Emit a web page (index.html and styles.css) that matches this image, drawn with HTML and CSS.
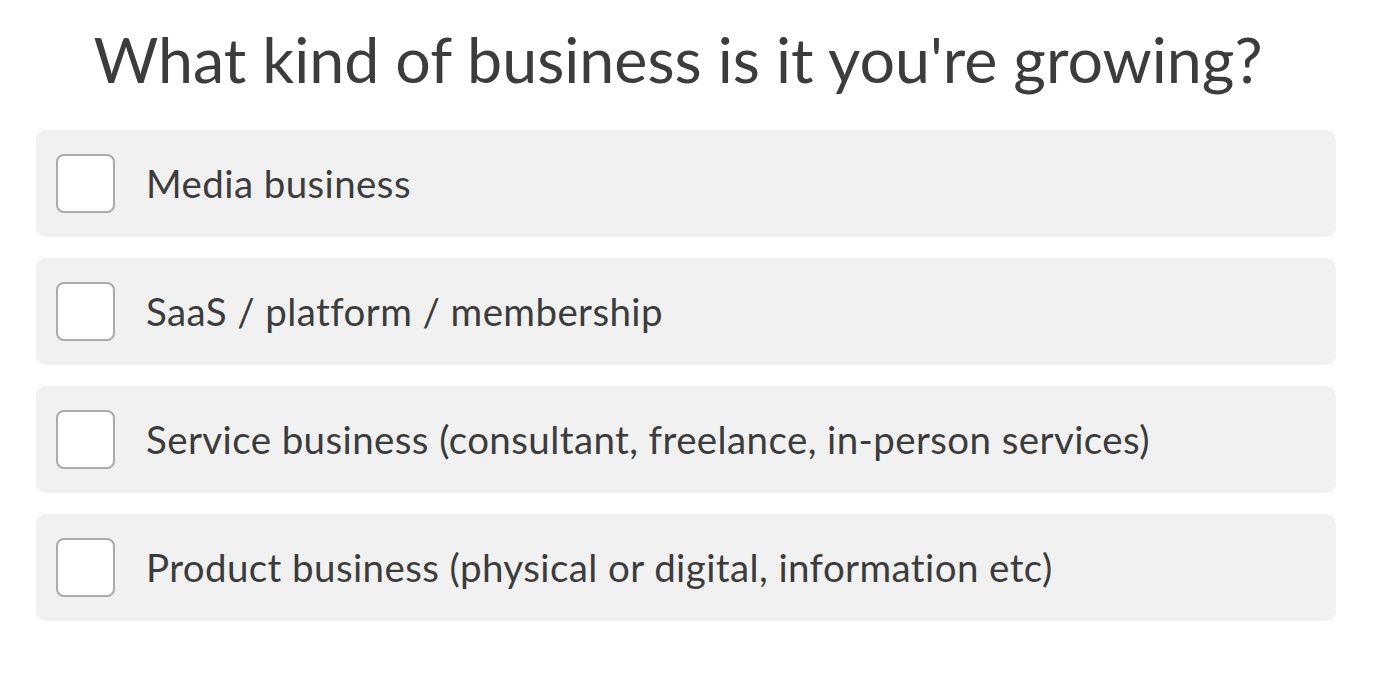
FILE: index.html
```html
<!DOCTYPE html>
<html lang="en">
<head>
    <meta charset="UTF-8">
    <title>Business type</title>
    <link rel="stylesheet" href="styles.css">
</head>
<body>
    <div class="question">
        <h1>What kind of business is it you're growing?</h1>

        <!-- options -->
        <div class="options">
            <label class="option"><span class="box"></span> Media business</label>
            <label class="option"><span class="box"></span> SaaS / platform / membership</label>
            <label class="option"><span class="box"></span> Service business (consultant, freelance, in-person services)</label>
            <label class="option"><span class="box"></span> Product business (physical or digital, information etc)</label>
        </div>
    </div>
</body>
</html>
```
FILE: styles.css
```css
body {
    margin: 0;
    font-family: Lato, "Open Sans", sans-serif;
    color: #3c3c3c;
    background: #fff;
}

.question {
    width: 1300px;
    margin-left: 36px;
}

h1 {
    margin: 0;
    padding: 19px 16px 0 0;
    height: 130px;
    box-sizing: border-box;
    font-size: 62.7px;
    font-weight: 400;
    line-height: 80px;
    text-align: center;
}

.options {
    display: flex;
    flex-direction: column;
    gap: 21px;
}

.option {
    display: flex;
    align-items: center;
    gap: 31px;
    height: 107px;
    padding-left: 20px;
    padding-bottom: 2px;
    box-sizing: border-box;
    background-color: #f1f1f1;
    border-radius: 10px;
    font-size: 38.5px;
    letter-spacing: 0.4px;
}

.box {
    width: 55px;
    height: 55px;
    margin-top: 2px;
    background: #fff;
    border: 2px solid #aaa;
    border-radius: 8px;
}
```
